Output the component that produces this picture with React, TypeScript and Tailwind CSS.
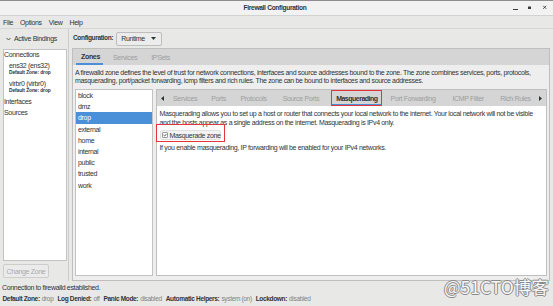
import React from "react";

const zones = ["block", "dmz", "drop", "external", "home", "internal", "public", "trusted", "work"];

function Tri({ dir }: { dir: "left" | "right" | "down" }) {
  if (dir === "down")
    return (
      <svg width="5" height="3" viewBox="0 0 5 3" className="block">
        <path d="M0 0 L5 0 L2.5 3 Z" fill="#2e3436" />
      </svg>
    );
  return (
    <svg width="3" height="5" viewBox="0 0 3 5" className="block">
      {dir === "left" ? <path d="M3 0 L3 5 L0 2.5 Z" fill="#2e3436" /> : <path d="M0 0 L0 5 L3 2.5 Z" fill="#2e3436" />}
    </svg>
  );
}

export default function App() {
  return (
    <div className="w-[553px] h-[306px] bg-[#e8e8e7] flex flex-col overflow-hidden relative font-['Liberation_Sans',Arial,sans-serif] text-[7px] leading-none tracking-[-0.33px] whitespace-nowrap text-[#2e3436]">
      {/* Title bar */}
      <div className="h-[16px] shrink-0 border-t border-t-[#8e8e8e] border-b border-b-[#d2d2d2] bg-[#f2f2f2] flex items-center">
        <div className="flex-1" />
        <div className="font-bold text-[6.6px] tracking-[-0.3px]">Firewall Configuration</div>
        <div className="flex-1 flex justify-end items-center pr-[3px]">
          <svg width="40" height="14" viewBox="0 0 40 14" className="block">
            <rect x="3" y="8" width="5" height="1" fill="#3a3a3a" />
            <rect x="18" y="5.5" width="3" height="2.5" fill="#3a3a3a" />
            <path d="M33.2 4.8 L36.2 7.8 M36.2 4.8 L33.2 7.8" stroke="#3a3a3a" strokeWidth="0.9" />
          </svg>
        </div>
      </div>

      {/* Menu bar */}
      <div className="h-[13px] shrink-0 border-b border-[#d6d6d6] flex items-center pl-[3px] gap-[7px]">
        <span>File</span>
        <span>Options</span>
        <span>View</span>
        <span>Help</span>
      </div>

      {/* Main */}
      <div className="h-[252px] shrink-0 flex">
        {/* Left pane */}
        <div className="w-[68px] shrink-0 flex flex-col">
          <div className="h-[19px] flex items-center pl-[6px] gap-[3px]">
            <svg width="5" height="4" viewBox="0 0 5 4" className="block">
              <path d="M0.5 1 L2.5 3 L4.5 1" stroke="#2e3436" strokeWidth="0.8" fill="none" />
            </svg>
            <span>Active Bindings</span>
          </div>
          <div className="mt-[1px] ml-[3px] w-[64px] h-[212px] bg-white border border-[#c3c3c3] flex flex-col">
            <div className="h-[9px] flex items-center">Connections</div>
            <div className="h-[9px] mt-[2px] flex items-center pl-[5px]">ens32 (ens32)</div>
            <div className="h-[6px] flex items-center pl-[5px] text-[4.9px] font-bold tracking-[-0.1px]">Default Zone: drop</div>
            <div className="h-[9px] mt-[3px] flex items-center pl-[5px]">virbr0 (virbr0)</div>
            <div className="h-[6px] flex items-center pl-[5px] text-[4.9px] font-bold tracking-[-0.1px]">Default Zone: drop</div>
            <div className="h-[9px] mt-[3px] flex items-center">Interfaces</div>
            <div className="h-[9px] mt-[2px] flex items-center">Sources</div>
          </div>
          <div className="mt-[3px] ml-[3px] w-[46px] h-[14px] border border-[#cdcdcd] rounded-[2px] bg-[#ebebeb] text-[#a9a9a9] flex items-center justify-center">
            Change Zone
          </div>
        </div>

        {/* Divider */}
        <div className="w-[4px] shrink-0 border-l border-[#cdcdcd]" />

        {/* Right pane */}
        <div className="flex-1 flex flex-col">
          <div className="h-[19px] flex items-center pl-[1px]">
            <span className="font-bold text-[6.5px]">Configuration:</span>
            <div className="ml-[3px] w-[46px] h-[14px] border border-[#bdbdbd] rounded-[2px] bg-[#ececec] flex items-center justify-between pl-[4px] pr-[5px]">
              <span>Runtime</span>
              <Tri dir="down" />
            </div>
          </div>

          {/* Outer notebook */}
          <div className="w-[478px] h-[233px] border border-[#bfbfbf] flex flex-col">
            <div className="h-[16px] shrink-0 bg-[#d5d5d5] flex items-stretch">
              <div className="ml-[3px] w-[27px] flex items-center pl-[5px] font-bold border-b-2 border-[#4a90d9] pt-[1px]">Zones</div>
              <div className="ml-[10px] flex items-center text-[#9c9e9e]">Services</div>
              <div className="ml-[14px] flex items-center text-[#9c9e9e]">IPSets</div>
            </div>
            <div className="flex-1 bg-[#eeeeee] flex flex-col">
              <div className="pt-[3px] pl-[2px]">
                <div className="h-[8px] flex items-center">
                  A firewalld zone defines the level of trust for network connections, interfaces and source addresses bound to the zone. The zone combines services, ports, protocols,
                </div>
                <div className="h-[8px] flex items-center">
                  masquerading, port/packet forwarding, icmp filters and rich rules. The zone can be bound to interfaces and source addresses.
                </div>
              </div>
              <div className="mt-[5px] pl-[2px] flex gap-[3px] h-[187px]">
                {/* Zone list */}
                <div className="w-[78px] bg-white border border-[#c3c3c3] flex flex-col">
                  {zones.map((z) => (
                    <div
                      key={z}
                      className={
                        z === "drop"
                          ? "h-[11.2px] flex items-center pl-[2px] bg-[#4a90d9] text-white"
                          : "h-[11.2px] flex items-center pl-[2px]"
                      }
                    >
                      {z}
                    </div>
                  ))}
                </div>
                {/* Inner notebook */}
                <div className="w-[391px] border border-[#bfbfbf] flex flex-col">
                  <div className="h-[16px] shrink-0 bg-[#d5d5d5] flex items-stretch text-[#9c9e9e]">
                    <div className="ml-[4px] flex items-center"><Tri dir="left" /></div>
                    <div className="ml-[9px] flex items-center">Services</div>
                    <div className="ml-[14px] flex items-center">Ports</div>
                    <div className="ml-[14.5px] flex items-center">Protocols</div>
                    <div className="ml-[16px] flex items-center">Source Ports</div>
                    <div className="ml-[17px] relative flex items-center font-bold text-[#2e3436] tracking-[-0.5px]">
                      Masquerading
                      <div className="absolute -left-[5px] -right-[4px] bottom-0 h-[2px] bg-[#4a90d9]" />
                      <div className="absolute -left-[5px] -right-[4px] top-0 bottom-0 border border-[#e2353c]" />
                    </div>
                    <div className="ml-[13px] flex items-center">Port Forwarding</div>
                    <div className="ml-[17px] flex items-center">ICMP Filter</div>
                    <div className="ml-[16.5px] flex items-center">Rich Rules</div>
                    <div className="ml-auto mr-[4.5px] flex items-center"><Tri dir="right" /></div>
                  </div>
                  <div className="flex-1 bg-white relative pt-[3px] pl-[2.5px]">
                    <div className="h-[9px] flex items-center">
                      Masquerading allows you to set up a host or router that connects your local network to the internet. Your local network will not be visible
                    </div>
                    <div className="h-[9px] flex items-center">
                      and the hosts appear as a single address on the internet. Masquerading is IPv4 only.
                    </div>
                    <div className="mt-[3px] h-[10px] w-[61px] flex items-center gap-[1.5px] pl-[1.5px] bg-[#f3f3f3] border border-[#e0e0e0] rounded-[2px]">
                      <div className="w-[6px] h-[6px] shrink-0 border border-[#9a9a9a] bg-white rounded-[1px] flex items-center justify-center">
                        <svg width="5" height="4" viewBox="0 0 5 4" className="block">
                          <path d="M0.6 2 L2 3.3 L4.4 0.6" stroke="#2e3436" strokeWidth="1" fill="none" />
                        </svg>
                      </div>
                      <span>Masquerade zone</span>
                    </div>
                    <div className="mt-[3px] h-[9px] flex items-center">
                      If you enable masquerading, IP forwarding will be enabled for your IPv4 networks.
                    </div>
                    <div className="absolute left-[-1px] top-[18px] w-[69px] h-[18px] border border-[#e2353c]" />
                  </div>
                </div>
              </div>
            </div>
          </div>
        </div>
      </div>

      {/* Status */}
      <div className="h-[12px] shrink-0 flex items-center pl-[2px]">Connection to firewalld established.</div>
      <div className="h-[13px] shrink-0 flex items-center pl-[2.5px] text-[6.5px]">
        <span className="font-bold">Default Zone:</span>
        <span className="ml-[2px] text-[#7f8383]">drop</span>
        <span className="ml-[4px] font-bold">Log Denied:</span>
        <span className="ml-[2px] text-[#7f8383]">off</span>
        <span className="ml-[4px] font-bold">Panic Mode:</span>
        <span className="ml-[2px] text-[#7f8383]">disabled</span>
        <span className="ml-[4px] font-bold">Automatic Helpers:</span>
        <span className="ml-[2px] text-[#7f8383]">system (on)</span>
        <span className="ml-[4px] font-bold">Lockdown:</span>
        <span className="ml-[2px] text-[#7f8383]">disabled</span>
      </div>

      {/* Watermark */}
      <div className="absolute left-[444px] top-[278px] text-[17.5px] leading-none tracking-normal font-['Noto_Sans_CJK_SC','Noto_Sans',sans-serif] text-[#f7f7f7] [text-shadow:1px_0_0_#8a8a8a,-1px_0_0_#8a8a8a,0_1px_0_#8a8a8a,0_-1px_0_#8a8a8a]">
        @51CTO博客
      </div>
    </div>
  );
}
